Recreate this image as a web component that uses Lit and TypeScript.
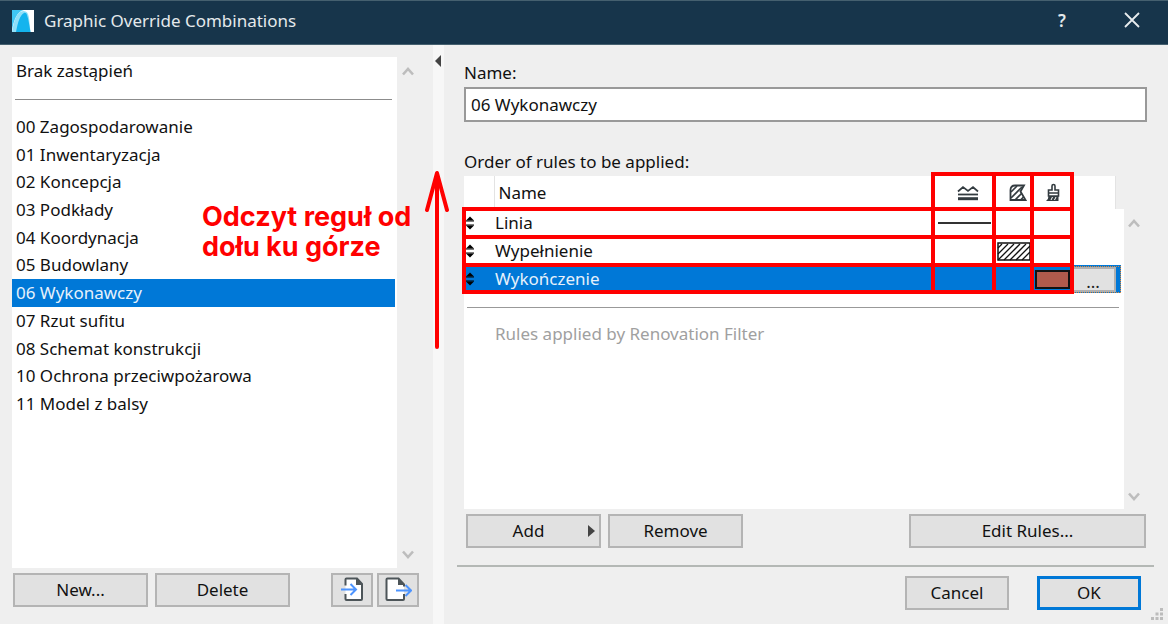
import { LitElement, html, css, svg } from "lit";
import { customElement, state } from "lit/decorators.js";
import { classMap } from "lit/directives/class-map.js";

const COMBINATIONS = [
  "00 Zagospodarowanie",
  "01 Inwentaryzacja",
  "02 Koncepcja",
  "03 Podkłady",
  "04 Koordynacja",
  "05 Budowlany",
  "06 Wykonawczy",
  "07 Rzut sufitu",
  "08 Schemat konstrukcji",
  "10 Ochrona przeciwpożarowa",
  "11 Model z balsy",
];

const RULES = ["Linia", "Wypełnienie", "Wykończenie"];

const appLogo = html`<svg class="logo" viewBox="0 0 22 22" aria-hidden="true">
  <rect width="22" height="22" fill="#fff" />
  <path d="M0 0h12C5 1 2 10 0 20z" fill="#3fc6f3" />
  <path d="M0 22C2 10 5 1 11.500 1S17 10 18.500 22z" fill="#8fdff8" />
  <path d="M4 22C6 12 8 5 12 3c1.500-.5 2.500.5 3 2 1.500 4 2.500 11 3.500 17z" fill="#14b4ee" />
</svg>`;

const chevronUp = html`<svg viewBox="0 0 12 10" width="12" height="10" aria-hidden="true">
  <path d="M1 8.500L6 3l5 5.500" fill="none" stroke="#bdbdbd" stroke-width="2.600" />
</svg>`;

const chevronDown = html`<svg viewBox="0 0 12 10" width="12" height="10" aria-hidden="true">
  <path d="M1 1.500L6 7l5-5.500" fill="none" stroke="#bdbdbd" stroke-width="2.600" />
</svg>`;

const importIcon = html`<svg viewBox="0 0 26 26" width="26" height="26" aria-hidden="true">
  <path d="M6.500 9.500V3.500q0-1 1-1H18l5 5.500V23q0 1-1 1h-14.500q-1 0-1-1v-5" fill="#fff" stroke="#4d5559" stroke-width="2" />
  <path d="M17 2v7h6.500z" fill="#4d5559" />
  <path d="M2 13.500h15M11.500 8l5.500 5.500-5.500 5.500" fill="none" stroke="#4d94ff" stroke-width="2" />
</svg>`;

const exportIcon = html`<svg viewBox="0 0 28 26" width="28" height="26" aria-hidden="true">
  <path d="M20 18v5q0 1-1 1H3.500q-1 0-1-1V3.500q0-1 1-1H14.500L20 8.500v2" fill="#fff" stroke="#4d5559" stroke-width="2" />
  <path d="M14 2v7h6.500z" fill="#4d5559" />
  <path d="M12 14.500h15M21.500 9l5.500 5.500-5.500 5.500" fill="none" stroke="#4d94ff" stroke-width="2" />
</svg>`;

const lineIcon = html`<svg viewBox="0 0 22 16" width="22" height="16" role="img" aria-label="Line">
  <path d="M1 6.500l5-4.500 5 4 5-4 5 4.500" fill="none" stroke="#333b40" stroke-width="1.700" />
  <path d="M1 9.500h20" stroke="#333b40" stroke-width="1.800" />
  <path d="M1 13.700h20" stroke="#333b40" stroke-width="3" />
</svg>`;

const fillIcon = html`<svg viewBox="0 0 18 18" width="18" height="18" role="img" aria-label="Fill">
  <path d="M1.500 16V6q0-4.500 4.500-4.500h9L11.500 7.500l5 8.500z" fill="none" stroke="#333b40" stroke-width="1.800" />
  <path d="M2 8l6-6M2 14L13 3M6 16L12.500 9.500M11.500 16l3-3" stroke="#333b40" stroke-width="1.700" fill="none" />
</svg>`;

const brushIcon = html`<svg viewBox="0 0 18 20" width="18" height="20" role="img" aria-label="Surface">
  <path d="M8 7V3q0-1.500 1.500-1.500T11 3v4h3.500v6H4.500V7zM4.500 10h10" fill="none" stroke="#333b40" stroke-width="1.600" />
  <path d="M4.500 13h10v5H2q2.500-1.500 2.500-5z" fill="#333b40" />
  <path d="M7 17l1.500-3M10.500 17l1.500-3" stroke="#fff" stroke-width="1" />
</svg>`;

const sortHandle = html`<svg viewBox="0 0 8 14" width="8" height="14" aria-hidden="true">
  <path d="M0 4.500L4 .5l4 4zM0 9.500l4 4 4-4z" fill="#000" /><path d="M0 5h8M0 9h8" stroke="#000" />
</svg>`;

const hatch = html`<svg class="hatch" viewBox="0 0 34 19" aria-hidden="true">
  <rect x="1" y="1" width="32" height="17" fill="#fff" stroke="#111" stroke-width="1.500" />
  ${[-12, -6, 0, 6, 12, 18, 24].map(
    (x) => svg`<path d="M${Math.max(x + 1, 1)} ${x < 0 ? 18 + x : 18}L${Math.min(x + 17, 33)} ${x + 17 > 33 ? 2 + x + 17 - 33 : 2}" stroke="#111" stroke-width="1.300" />`,
  )}
</svg>`;

@customElement("app-root")
export class AppRoot extends LitElement {
  @state() private selected = 6;
  @state() private rule = 2;

  static styles = css`
    :host {
      display: flex;
      flex-direction: column;
      min-height: 100vh;
      box-sizing: border-box;
      background: #efefef;
      color: #111;
      font: 17px/24px "Noto Sans", "Open Sans", sans-serif;
    }
    *, *::before, *::after { box-sizing: border-box; }
    button, input { font: inherit; color: inherit; margin: 0; border-radius: 0; }
    button { padding: 0; border: 0; background: none; }
    svg { display: block; flex: none; }

    .title {
      display: flex;
      align-items: center;
      height: 45px;
      padding: 0 12px;
      background: #17354b;
      border: solid #45606f;
      border-width: 1px 0;
      color: #e4e9ec;
    }
    .logo { width: 22px; height: 22px; margin-right: 10px; margin-bottom: 4px; }
    .title h1 { flex: 1; margin: 0; padding-bottom: 4px; font-size: 17px; font-weight: 400; }
    .help { width: 30px; margin-right: 40px; padding-bottom: 4px; font-weight: 600; }
    .close { display: grid; place-items: center; width: 30px; height: 30px; margin-right: 9px; padding-bottom: 6px; }

    .body { flex: 1; display: flex; position: relative; }
    .left { display: flex; flex-direction: column; width: 433px; padding: 12px 13px 17px 12px; gap: 5px; }
    .list-area { flex: 1; display: flex; }
    .list { flex: 1; background: #fff; padding: 2px 0 0; }
    .scroll { display: flex; flex-direction: column; justify-content: space-between; align-items: center; width: 23px; padding: 9px 1px 8px 0; }
    .item { display: block; width: 100%; height: 100%; padding: 0 4px; text-align: left; }
    .none { height: 24px; }
    .rule { height: 1px; margin: 16px 5px 13px 3px; border: 0; background: #8c8c8c; }
    .items { display: grid; grid-auto-rows: 1fr; height: 305px; margin: 0 2px 0 0; padding: 0; list-style: none; }
    .item.on { background: #0078d7; color: #e6f1fb; }

    .bar { display: flex; gap: 7px; }
    .btn { height: 34px; border: 2px solid #b4b4b4; background: #e1e1e1; display: flex; align-items: center; justify-content: center; padding-bottom: 1px; }
    .std { width: 135px; }
    .left .bar { padding: 0 1px; }
    .icons { display: flex; gap: 4px; margin-left: auto; }
    .icons .btn { width: 42px; padding: 0 0 2px; }

    .split { width: 11px; background: #f7f7f7; padding: 10px 2px; }
    .right { flex: 1; display: flex; flex-direction: column; padding: 16px 14px 14px 13px; min-width: 0; }
    .form { flex: 1; display: flex; flex-direction: column; padding: 0 7px; }
    .name { height: 35px; margin: 2px 0 28px; padding: 0 5px; border: 2px solid #999; background: #fff; outline: 0; width: 100%; }
    .table-area { flex: 1; display: flex; margin: 2px 0 5px; }
    .panel { flex: 1; position: relative; background: #fff; }
    table { width: 100%; table-layout: fixed; border-collapse: collapse; }
    th, td { padding: 0; font-weight: 400; text-align: left; height: 28px; line-height: 24px; }
    th { height: 33px; }
    th.icon { padding-left: 7px; }
    th svg, .line, .hatch, .swatch { margin: 0 auto; }
    .th-name { padding-left: 4px; border-left: 1px solid #e3e3e3; }
    td.label { padding-left: 1px; }
    .w-handle { width: 30px; }
    .w-line { width: 61px; }
    .w-fill { width: 38px; }
    .w-surf { width: 39px; }
    .w-more { width: 52px; }
    .gap { background: linear-gradient(90deg, transparent 43px, #e3e3e3 43px, #e3e3e3 44px, #efefef 44px); }
    .handle { padding-left: 2px; }
    .row.on { background: #0078d7; color: #e6f1fb; }
    .row.on td:last-child { background: linear-gradient(90deg, #0078d7 49px, #fff 49px); }
    .line { height: 2px; width: 53px; background: #333; }
    .hatch { width: 34px; height: 19px; }
    .swatch { width: 35px; height: 19px; background: #b05a4c; border: 2px solid #111; }
    .more { display: block; width: 49px; height: 27px; border: 1px dotted #e08a3c; border-left: 0; background: #0078d7; }
    .dots { display: block; width: 44px; height: 25px; border: 2px solid #b0b0b0; border-width: 2px 2px 2px 0; background: #e1e1e1; color: #222; line-height: 26px; text-align: center; }
    .sep { height: 1px; margin: 14px 5px 14px 3px; background: #999; border: 0; }
    .filter { margin: 0; padding-left: 31px; color: #a0a0a0; }

    .mark { position: absolute; left: -2px; right: 50px; top: -4px; height: 122px; pointer-events: none; display: grid; grid-template-columns: 1fr 61px 38px 44px; grid-template-rows: 39px 28px 28px 27px; }
    .mark i { border: solid #f00; border-width: 0 0 4px 4px; }
    .mark i.top { border-top-width: 4px; }
    .mark i.end { border-right-width: 4px; }
    .mark i.blank { border-left-width: 0; }

    .scroll.rules { padding: 42px 3px 7px 0; }
    .add { position: relative; padding-right: 10px; }
    .add svg { position: absolute; right: 4px; top: 9px; }
    .edit { width: 237px; margin-left: auto; }
    .bar.form-bar { padding: 0 1px 0 2px; }
    .foot-rule { height: 2px; margin: 17px 0 9px; border: 0; background: #b4b8b5; }
    .foot { display: flex; justify-content: flex-end; gap: 28px; padding-right: 13px; }
    .foot .btn { width: 104px; }
    .foot .ok { border: 3px solid #0078d7; }
    .grip { position: absolute; right: 4px; bottom: 3px; }

    .note { position: absolute; left: 202px; top: 157px; margin: 0; color: #f00; font: 700 27px/30px Inter, sans-serif; pointer-events: none; }
    .arrow { position: absolute; left: 424px; top: 124px; pointer-events: none; }
  `;

  private swatchFor(row: number, col: number) {
    if (row !== col) return "";
    if (row === 0) return html`<div class="line"></div>`;
    if (row === 1) return hatch;
    return html`<div class="swatch"></div>`;
  }

  private leftPanel() {
    return html`<section class="left">
      <div class="list-area">
        <div class="list">
          <button class="item none" @click=${() => (this.selected = -1)}>Brak zastąpień</button>
          <hr class="rule" />
          <ul class="items">
            ${COMBINATIONS.map(
              (name, i) => html`<li>
                <button class=${classMap({ item: true, on: i === this.selected })} @click=${() => (this.selected = i)}>${name}</button>
              </li>`,
            )}
          </ul>
        </div>
        <div class="scroll">
          <button aria-label="Scroll up">${chevronUp}</button>
          <button aria-label="Scroll down">${chevronDown}</button>
        </div>
      </div>
      <div class="bar">
        <button class="btn std">New...</button>
        <button class="btn std">Delete</button>
        <div class="icons">
          <button class="btn" aria-label="Import">${importIcon}</button>
          <button class="btn" aria-label="Export">${exportIcon}</button>
        </div>
      </div>
    </section>`;
  }

  private rulesTable() {
    return html`<table aria-labelledby="order">
      <colgroup>
        <col class="w-handle" /><col /><col class="w-line" /><col class="w-fill" /><col class="w-surf" /><col class="w-more" />
      </colgroup>
      <thead>
        <tr>
          <th></th>
          <th class="th-name">Name</th>
          <th class="icon">${lineIcon}</th>
          <th class="icon">${fillIcon}</th>
          <th>${brushIcon}</th>
          <th class="gap"></th>
        </tr>
      </thead>
      <tbody>
        ${RULES.map(
          (name, i) => html`<tr class=${classMap({ row: true, on: i === this.rule })} @click=${() => (this.rule = i)}>
            <td class="handle">${sortHandle}</td>
            <td class="label">${name}</td>
            <td>${this.swatchFor(i, 0)}</td>
            <td>${this.swatchFor(i, 1)}</td>
            <td>${this.swatchFor(i, 2)}</td>
            <td>
              ${i === this.rule ? html`<button class="more" aria-label="Choose rule"><span class="dots">...</span></button>` : ""}
            </td>
          </tr>`,
        )}
      </tbody>
    </table>`;
  }

  private marks() {
    return html`<div class="mark" aria-hidden="true">
      ${[0, 1, 2, 3].map((r) =>
        [0, 1, 2, 3].map(
          (c) => html`<i class=${classMap({ top: r === 0 && c > 0, end: c === 3, blank: r === 0 && c === 0 })}></i>`,
        ),
      )}
    </div>`;
  }

  render() {
    return html`
      <header class="title">
        ${appLogo}
        <h1>Graphic Override Combinations</h1>
        <button class="help">?</button>
        <button class="close" aria-label="Close">
          <svg viewBox="0 0 16 16" width="16" height="16"><path d="M1 1l14 14M15 1L1 15" stroke="#e8ecee" stroke-width="1.800" /></svg>
        </button>
      </header>
      <main class="body">
        ${this.leftPanel()}
        <div class="split">
          <svg viewBox="0 0 6 12" width="6" height="12"><path d="M6 0v12L0 6z" fill="#444" /></svg>
        </div>
        <section class="right">
          <div class="form">
            <label for="name">Name:</label>
            <input class="name" id="name" type="text" value="06 Wykonawczy" />
            <span id="order">Order of rules to be applied:</span>
            <div class="table-area">
              <div class="panel">
                ${this.rulesTable()}
                <hr class="sep" />
                <p class="filter">Rules applied by Renovation Filter</p>
                ${this.marks()}
              </div>
              <div class="scroll rules">
                <button aria-label="Scroll rules up">${chevronUp}</button>
                <button aria-label="Scroll rules down">${chevronDown}</button>
              </div>
            </div>
            <div class="bar form-bar">
              <button class="btn std add">
                Add
                <svg viewBox="0 0 7 12" width="7" height="12"><path d="M0 0v12l7-6z" fill="#444" /></svg>
              </button>
              <button class="btn std">Remove</button>
              <button class="btn edit">Edit Rules...</button>
            </div>
          </div>
          <hr class="foot-rule" />
          <div class="foot">
            <button class="btn">Cancel</button>
            <button class="btn ok">OK</button>
          </div>
        </section>
        <svg class="grip" viewBox="0 0 14 14" width="14" height="14" aria-hidden="true">
          <path d="M10 1h3v3h-3zM5.500 5.500h3v3h-3zM10 5.500h3v3h-3zM1 10h3v3H1zM5.500 10h3v3h-3zM10 10h3v3h-3z" fill="#bcbcbc" />
        </svg>
        <p class="note">Odczyt reguł od<br />dołu ku górze</p>
        <svg class="arrow" viewBox="0 0 26 182" width="26" height="182" aria-hidden="true">
          <path d="M13 178V5M3 41L13 4l10 37" fill="none" stroke="#f00" stroke-width="4" stroke-linecap="round" stroke-linejoin="round" />
        </svg>
      </main>
    `;
  }
}
